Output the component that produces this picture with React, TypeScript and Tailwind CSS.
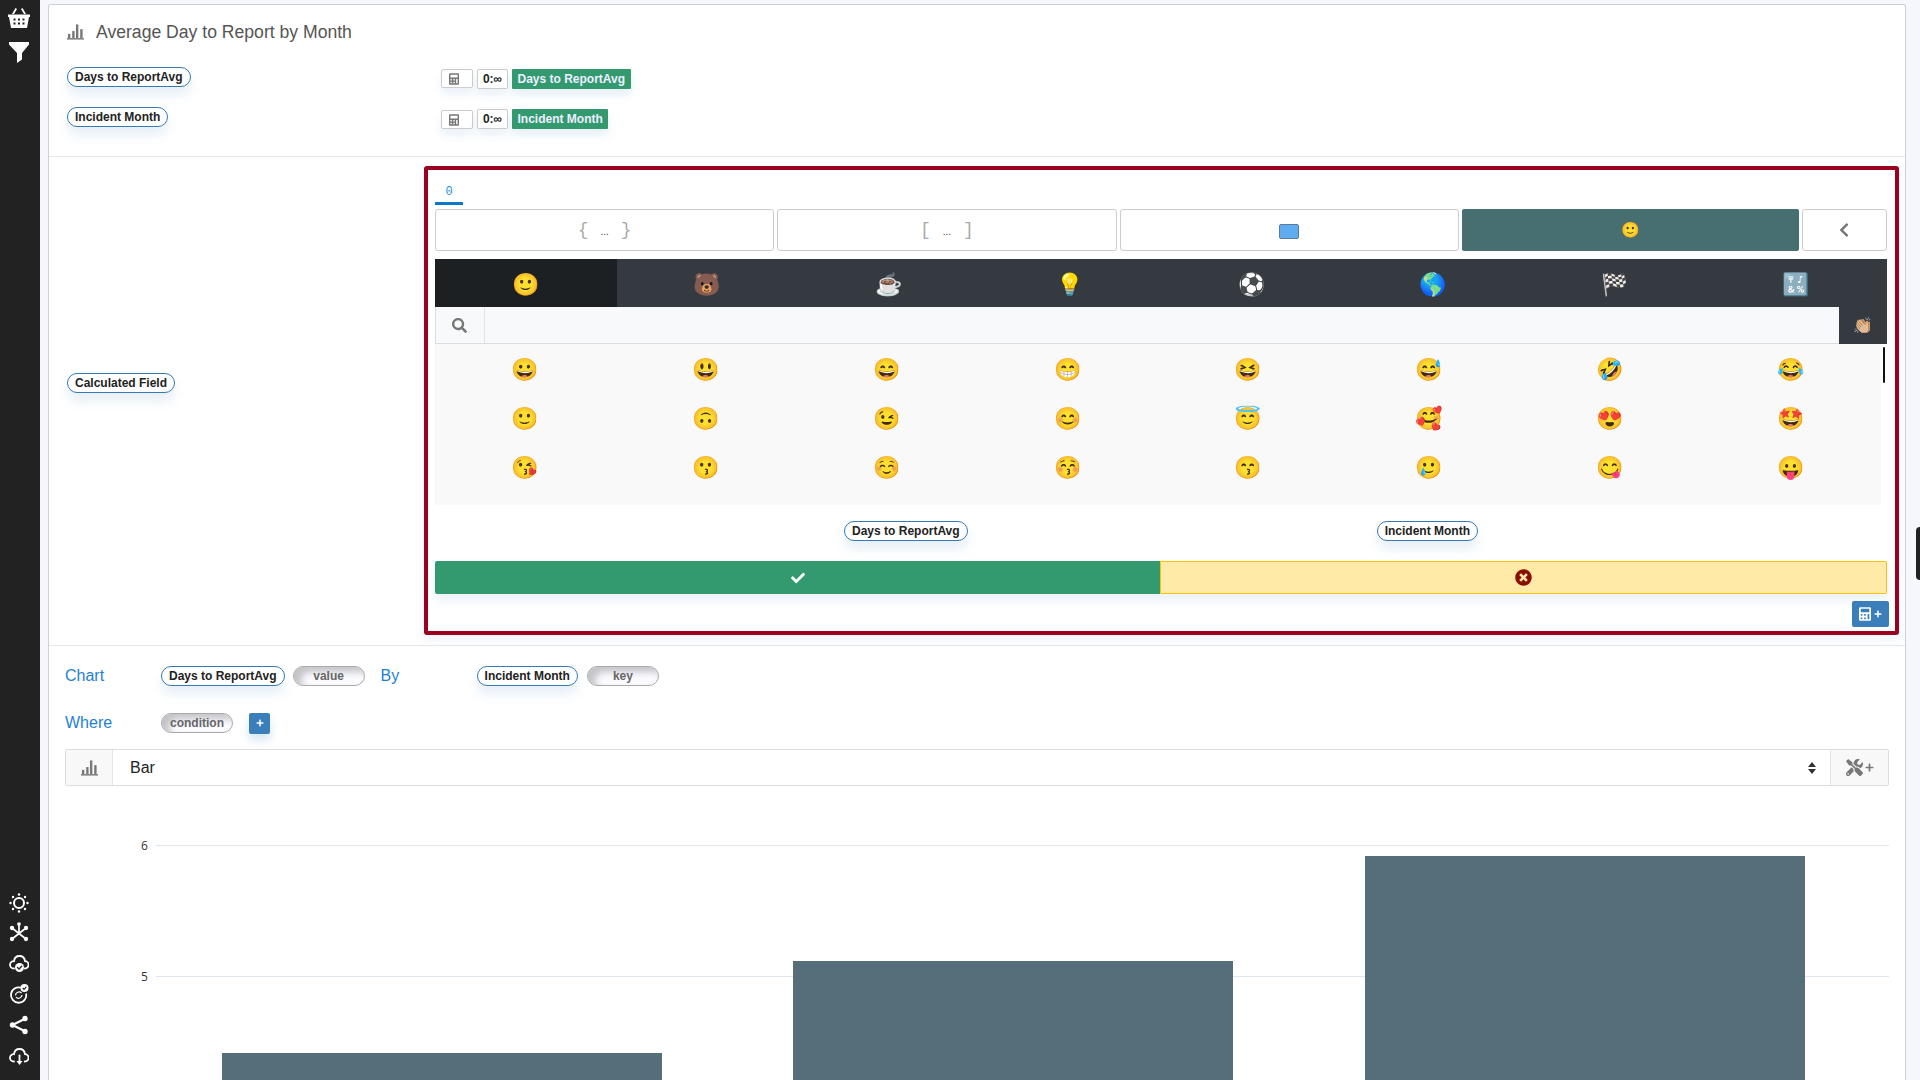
import React from "react";
import { FaCalculator, FaTools, FaChevronLeft, FaCheck, FaTimesCircle, FaSearch, FaPlus } from "react-icons/fa";

const emoji = "font-['Noto_Color_Emoji','Noto_Sans',sans-serif]";
const rows = [
  ["😀","😃","😄","😁","😆","😅","🤣","😂"],
  ["🙂","🙃","😉","😊","😇","🥰","😍","🤩"],
  ["😘","😗","☺️","😚","😙","🥲","😋","😛"],
  ["😜","🤪","😝","🤑","🤗","🤭","🤫","🤔"],
];
const tabs = ["🙂","🐻","☕","💡","⚽","🌎","🏁","🔣"];
const cloud = "M5 15.5C2.5 15.5 1 13.7 1 11.7C1 9.6 2.8 8 5 8.2C5.4 5 7.8 3 10.5 3C13.5 3 15.6 5.2 16 8.2C18 8.2 19.5 9.8 19.5 11.8C19.5 13.8 18 15.5 15.8 15.5";

function Bars({ className }: { className?: string }) {
  return (
    <svg viewBox="0 0 18 16" className={className} fill="currentColor">
      <rect x="0" y="14.5" width="18" height="1.5" />
      <rect x="1" y="10" width="2.5" height="4.5" />
      <rect x="5.5" y="7" width="2.5" height="7.5" />
      <rect x="9.5" y="0" width="2.5" height="14.5" />
      <rect x="14" y="5" width="2.5" height="9.5" />
    </svg>
  );
}

function Pill({ children }: { children: React.ReactNode }) {
  return (
    <span className="inline-flex h-5 items-center rounded-full border border-[#337ab7] bg-white px-[7px] text-xs font-bold text-[#222] shadow-[0_8px_12px_rgba(51,122,183,0.12)] whitespace-nowrap">
      {children}
    </span>
  );
}

function GreyPill({ children, w }: { children: React.ReactNode; w: string }) {
  return (
    <span className={`flex h-5 ${w} items-center justify-center rounded-full border border-[#aaa] bg-[#fafaff] text-xs font-bold text-[#666] shadow-[inset_7px_5px_7px_#c4c4c8]`}>
      {children}
    </span>
  );
}

function Mapping({ label, mt, calcTop }: { label: string; mt: string; calcTop: string }) {
  return (
    <div className={`flex items-start ${mt}`}>
      <div className="flex w-[374px]"><Pill>{label}</Pill></div>
      <div className="mt-[2px] flex items-start gap-[4px]">
        <span className={`flex h-[19px] w-8 items-center rounded-[2px] border border-[#ccc] bg-white pl-[7px] text-[#777] shadow-[0_6px_10px_rgba(51,122,183,0.1)] ${calcTop}`}>
          <FaCalculator className="h-3 w-[10px]" />
        </span>
        <span className="flex h-5 w-[31px] items-center justify-center rounded-[2px] border border-[#ccc] bg-white text-xs font-bold text-[#222] shadow-[0_6px_10px_rgba(51,122,183,0.1)]">0:∞</span>
        <span className="flex h-5 items-center rounded-[1px] bg-[#339a70] px-[5.5px] text-xs font-bold text-[#eef] shadow-[0_6px_10px_rgba(51,122,183,0.12)]">{label}</span>
      </div>
    </div>
  );
}

function OutlineButton({ children, className }: { children: React.ReactNode; className?: string }) {
  return (
    <div className={`flex h-[42px] items-center justify-center rounded-[3px] border border-[#ccc] bg-white ${className ?? ""}`}>
      {children}
    </div>
  );
}

export default function App() {
  return (
    <div className="relative flex h-[1080px] w-[1920px] overflow-hidden bg-[#f5f7fc] font-['Liberation_Sans',sans-serif]">
      <aside className="flex w-10 shrink-0 flex-col items-center justify-between bg-[#222] pb-[14px] pr-[3px] pt-[7px] text-white">
        <div className="flex flex-col items-center gap-[13px]">
          <svg viewBox="0 0 22 22" className="h-[22px] w-[22px]" fill="white">
            <path d="M7.5 1L9 2L6 7H4ZM14.5 1L13 2L16 7H18Z" />
            <path d="M0 7.5H22V10H21L19 21H3L1 10H0Z" />
            <g fill="#222">
              <rect x="5.5" y="11.5" width="2" height="2" /><rect x="10" y="11.5" width="2" height="2" /><rect x="14.5" y="11.5" width="2" height="2" />
              <rect x="5.5" y="15.5" width="2" height="2" /><rect x="10" y="15.5" width="2" height="2" /><rect x="14.5" y="15.5" width="2" height="2" />
            </g>
          </svg>
          <svg viewBox="0 0 20 21" className="h-[21px] w-5" fill="white">
            <path d="M0 0H20V2.5L13 11V17.5L8 21V11L0 2.5Z" />
          </svg>
        </div>
        <div className="flex flex-col items-center gap-[11px]">
          <svg viewBox="0 0 20 20" className="-mb-[2px] h-5 w-5" fill="none" stroke="white">
            <circle cx="10" cy="10" r="5" strokeWidth="2" />
            <g fill="white" stroke="none">
              <circle cx="10" cy="1.5" r="1.2" /><circle cx="10" cy="18.5" r="1.2" /><circle cx="1.5" cy="10" r="1.2" /><circle cx="18.5" cy="10" r="1.2" />
              <circle cx="4" cy="4" r="1.2" /><circle cx="16" cy="4" r="1.2" /><circle cx="4" cy="16" r="1.2" /><circle cx="16" cy="16" r="1.2" />
            </g>
          </svg>
          <svg viewBox="0 0 20 20" className="h-5 w-5" fill="white" stroke="white" strokeWidth="1.7">
            <path d="M3 6L17 17M17 6L3 17M10 11.5L10 2" />
            <circle cx="3" cy="6" r="1.3" /><circle cx="17" cy="6" r="1.3" /><circle cx="3" cy="17" r="1.3" /><circle cx="17" cy="17" r="1.3" /><circle cx="10" cy="2" r="1" />
          </svg>
          <svg viewBox="0 0 20 20" className="h-5 w-5" fill="none" stroke="white" strokeWidth="1.8" strokeLinecap="round">
            <path d={cloud} />
            <circle cx="10.5" cy="14.5" r="4.5" fill="white" stroke="none" />
            <path d="M8.5 14.5L10 16L12.7 13.2" stroke="#222" strokeWidth="1.3" />
          </svg>
          <svg viewBox="0 0 20 20" className="h-5 w-5" fill="none" stroke="white" strokeWidth="1.8">
            <path d="M12 3.7A7.7 7.7 0 1 0 17.2 9.5" />
            <path d="M6.5 11.5A3.5 3.5 0 0 1 12.5 9M13 11A3.5 3.5 0 0 1 7 13.2" strokeWidth="1.2" />
            <circle cx="15.5" cy="4" r="4" fill="white" stroke="none" />
            <path d="M13.7 4L15 5.3L17.3 2.8" stroke="#222" strokeWidth="1.2" />
          </svg>
          <svg viewBox="0 0 20 20" className="h-5 w-5" fill="white" stroke="white" strokeWidth="2.2">
            <path d="M16.5 3.5L3.5 10L16.5 16.5" fill="none" />
            <circle cx="16" cy="3.5" r="1.6" /><circle cx="3.5" cy="10" r="1.6" /><circle cx="16" cy="16.5" r="1.6" />
          </svg>
          <svg viewBox="0 0 20 20" className="h-5 w-5" fill="none" stroke="white" strokeWidth="1.8" strokeLinecap="round">
            <path d={cloud} />
            <path d="M10.5 9.5V15" />
            <path d="M7.5 15H13.5L10.5 19Z" fill="white" stroke="none" />
          </svg>
        </div>
      </aside>

      <main className="ml-2 mr-[14px] mt-1 flex min-w-0 flex-1 flex-col overflow-hidden rounded-t-[3px] border border-b-0 border-[#ccd0d8] bg-white">
        <section className="border-b border-[#e8e8e8] px-[18px] pb-[27px] pt-4">
          <div className="flex h-[22px] items-center gap-3">
            <Bars className="h-4 w-[17px] text-[#777]" />
            <h1 className="text-[17.6px] font-normal text-[#555]">Average Day to Report by Month</h1>
          </div>
          <Mapping label="Days to ReportAvg" mt="mt-6" calcTop="" />
          <Mapping label="Incident Month" mt="mt-[18px]" calcTop="mt-px" />
        </section>

        <section className="flex border-b border-[#e8e8e8] pb-[10px] pr-[6px] pt-[9px]">
          <div className="flex w-[375px] shrink-0 items-center pb-[36px] pl-[18px]">
            <Pill>Calculated Field</Pill>
          </div>
          <div className="h-[469px] flex-1 rounded-[3px] border-4 border-[#9b0020] pl-[7px] pr-[8px] shadow-[0_4px_12px_rgba(51,122,183,0.1)]">
            <div className="flex h-[35px] w-7 items-end justify-center border-b-[3px] border-[#0b78d0] font-['Liberation_Mono',monospace] text-xs text-[#2b8ff0]">
              <span className="mb-[2px]">0</span>
            </div>
            <div className="mt-1 flex gap-[3px]">
              <OutlineButton className="flex-1 gap-3 font-['Liberation_Mono',monospace] text-[#aaa]">
                <span className="text-lg leading-none">{"{"}</span><span className="mt-[3px] font-['Liberation_Sans',sans-serif] text-[10px] text-[#444]">...</span><span className="text-lg leading-none">{"}"}</span>
              </OutlineButton>
              <OutlineButton className="flex-1 gap-3 font-['Liberation_Mono',monospace] text-[#aaa]">
                <span className="text-lg leading-none">[</span><span className="mt-[3px] font-['Liberation_Sans',sans-serif] text-[10px] text-[#444]">...</span><span className="text-lg leading-none">]</span>
              </OutlineButton>
              <OutlineButton className="flex-1">
                <span className="mt-[2px] block h-[15px] w-5 rounded-[2px] border border-[#5a7a96] bg-[#5fadf0]" />
              </OutlineButton>
              <div className={`flex h-[42px] flex-1 items-center justify-center rounded-[2px] bg-[#476f72] text-[15px] ${emoji}`}>🙂</div>
              <OutlineButton className="w-[85px] shrink-0 pr-[2px] text-[#777]">
                <FaChevronLeft className="h-4 w-4" />
              </OutlineButton>
            </div>

            <div className="mt-2 grid h-12 grid-cols-8 bg-[#343a40]">
              {tabs.map((t, i) => (
                <div key={t} className={`flex items-center justify-center pt-[2px] text-[22px] ${emoji} ${i === 0 ? "bg-[#1d2023]" : ""}`}>{t}</div>
              ))}
            </div>
            <div className="flex h-[37px]">
              <div className="flex flex-1 border-b border-l border-[#ddd] bg-[#f8f9fa]">
                <div className="flex w-[49px] items-center justify-center border-r border-[#e4e4e4] pr-[2px] text-[#777]">
                  <FaSearch className="h-[15px] w-[15px]" />
                </div>
              </div>
              <div className={`flex w-12 items-center justify-center bg-[#343a40] text-[16px] ${emoji}`}>👏🏼</div>
            </div>
            <div className="relative h-[161px] overflow-hidden pr-[6px]">
              <div className="h-full overflow-hidden bg-[#f9f9f9]">
                <div className="grid auto-rows-[49px] grid-cols-8 pt-px">
                  {rows.flat().map((e, i) => (
                    <div key={i} className={`flex items-center justify-center text-[22px] ${emoji}`}>{e}</div>
                  ))}
                </div>
              </div>
              <div className="absolute right-[2px] top-[3px] h-9 w-[2px] rounded-sm bg-[#111]" />
            </div>
            <div className="flex h-14 items-start justify-evenly pt-4">
              <Pill>Days to ReportAvg</Pill>
              <Pill>Incident Month</Pill>
            </div>
            <div className="flex h-[33px] shadow-[0_6px_12px_rgba(51,122,183,0.1)]">
              <div className="flex flex-1 items-center justify-center rounded-l-[2px] bg-[#339a70] text-white">
                <FaCheck className="h-[14px] w-[14px]" />
              </div>
              <div className="flex flex-1 items-center justify-center rounded-r-[2px] border border-[#ffc107] bg-[#ffeaa7] text-[#8b0f00]">
                <FaTimesCircle className="h-[17px] w-[17px]" />
              </div>
            </div>
            <div className="-mr-[2px] mt-[7px] flex justify-end">
              <div className="flex h-[26px] w-[37px] items-center justify-center gap-[3px] rounded-[2px] bg-[#3a7fba] text-white">
                <FaCalculator className="h-[14px] w-[12px]" />
                <FaPlus className="h-2 w-2" />
              </div>
            </div>
          </div>
        </section>

        <section className="px-4 pt-5">
          <div className="flex h-5 items-center">
            <span className="w-24 text-base text-[#1f7fd6]">Chart</span>
            <Pill>Days to ReportAvg</Pill>
            <span className="ml-2"><GreyPill w="w-[72px]">value</GreyPill></span>
            <span className="ml-4 w-24 text-base text-[#1f7fd6]">By</span>
            <Pill>Incident Month</Pill>
            <span className="ml-[9px]"><GreyPill w="w-[72px]">key</GreyPill></span>
          </div>
          <div className="mt-[27px] flex h-5 items-center">
            <span className="w-24 text-base text-[#1f7fd6]">Where</span>
            <GreyPill w="w-[72px]">condition</GreyPill>
            <span className="ml-4 flex h-[21px] w-[21px] items-center justify-center rounded-[2px] bg-[#3a7fba] text-white shadow-[0_6px_10px_rgba(51,122,183,0.2)]">
              <FaPlus className="h-2 w-2" />
            </span>
          </div>
          <div className="mt-4 flex h-[37px] rounded-[2px] border border-[#ddd] bg-white">
            <div className="flex w-[47px] items-center justify-center border-r border-[#e4e4e4] bg-[#f8f8f8] text-[#777]">
              <Bars className="h-4 w-[17px]" />
            </div>
            <div className="flex flex-1 items-center justify-between pl-[17px] pr-[14px] text-base text-[#222]">
              <span>Bar</span>
              <svg viewBox="0 0 8 12" className="h-3 w-2" fill="#333"><path d="M4 0L8 5H0ZM4 12L0 7H8Z" /></svg>
            </div>
            <div className="flex w-[58px] items-center justify-center gap-[2px] border-l border-[#e4e4e4] bg-[#f8f8f8] text-[#777]">
              <FaTools className="h-[17px] w-[17px]" />
              <FaPlus className="h-[9px] w-[9px]" />
            </div>
          </div>
        </section>

        <svg viewBox="0 0 1856 294" className="block h-[294px] w-[1856px] shrink-0">
          <line x1="107" x2="1840" y1="59.5" y2="59.5" stroke="#e0e6f1" />
          <line x1="107" x2="1840" y1="190.5" y2="190.5" stroke="#e0e6f1" />
          <text x="92" y="64" fontSize="12" fill="#333" fontFamily="Open Sans, sans-serif">6</text>
          <text x="92" y="195" fontSize="12" fill="#333" fontFamily="Open Sans, sans-serif">5</text>
          <rect x="173" y="267" width="440" height="27" fill="#566e7a" />
          <rect x="744" y="175" width="440" height="119" fill="#566e7a" />
          <rect x="1316" y="70" width="440" height="224" fill="#566e7a" />
        </svg>
      </main>

      <div className="absolute right-0 top-[527px] h-[53px] w-1 rounded-l-sm bg-[#222]" />
    </div>
  );
}
